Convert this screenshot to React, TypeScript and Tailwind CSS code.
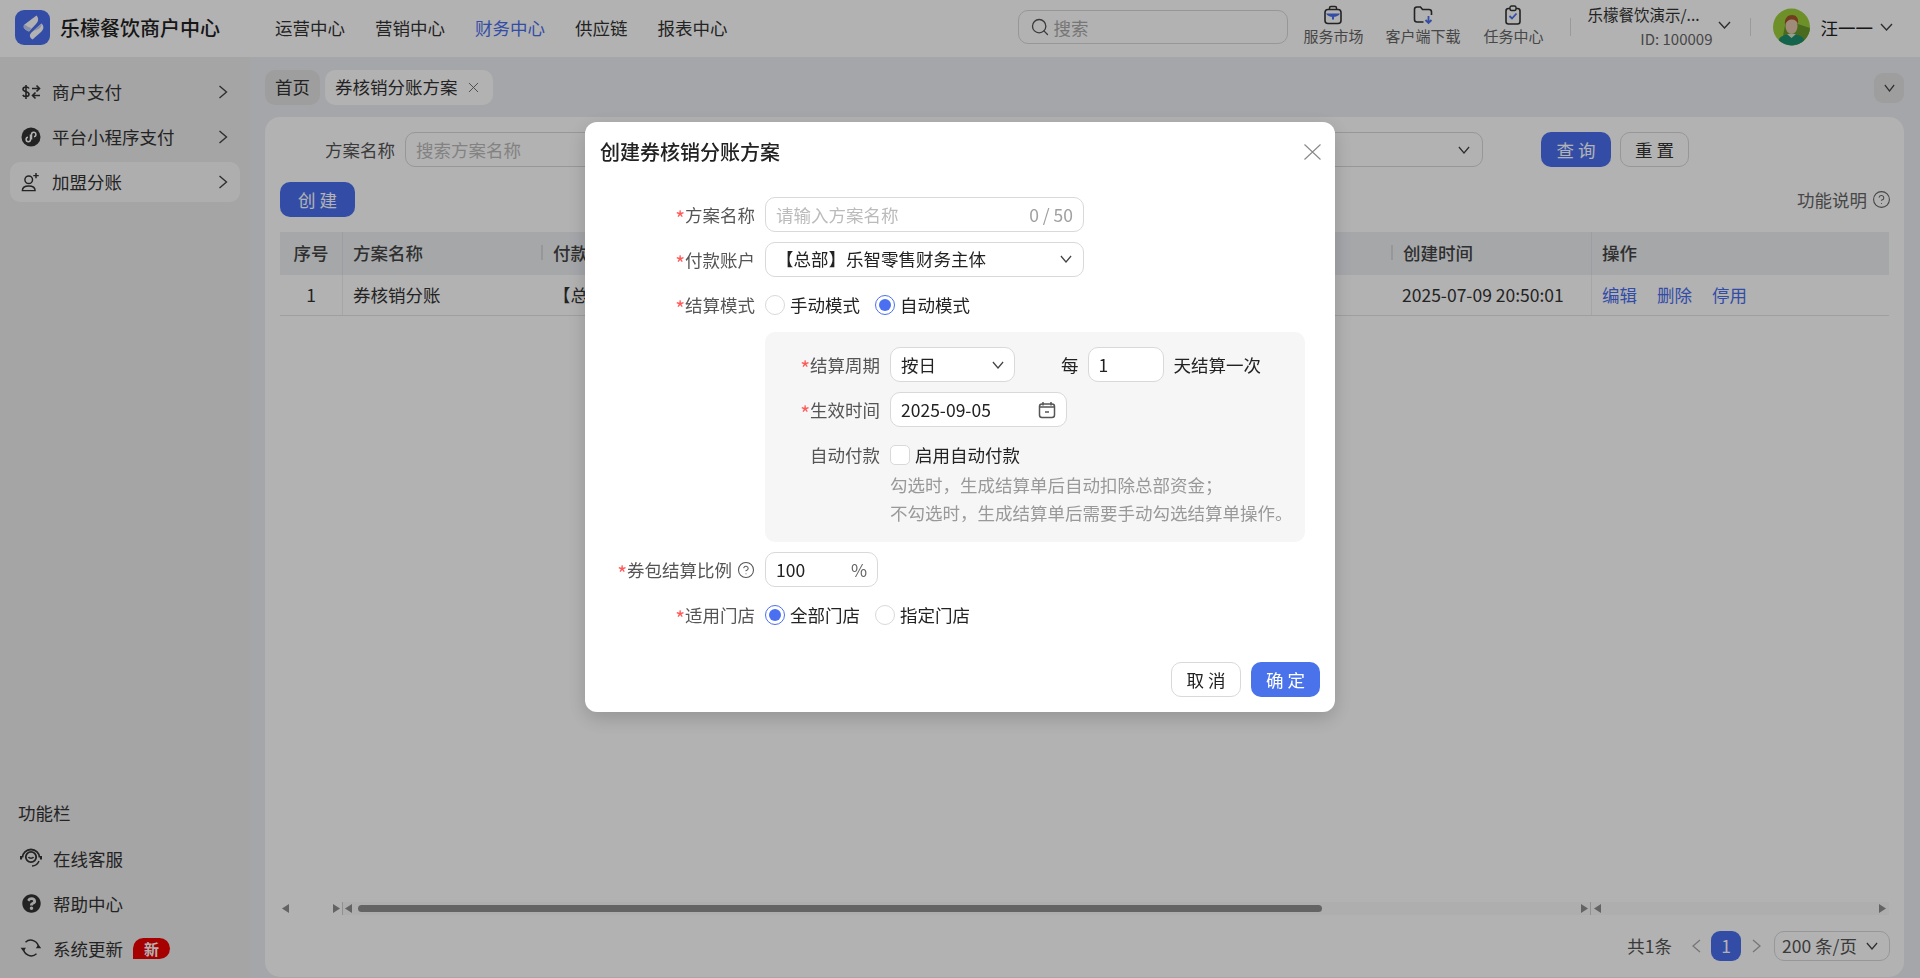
import { CircleHelp, Search, X } from "lucide-react";
import { FaQuestionCircle } from "react-icons/fa";

// ── Small icons ────────────────────────────────────────────────────────────────

function ChevRight() {
  return (
    <svg width="10" height="14" viewBox="0 0 10 14" fill="none" stroke="#444" strokeWidth="1.4">
      <path d="M1.5 1l7 6-7 6" />
    </svg>
  );
}

function ChevDown({ color = "#444", w = 13 }: { color?: string; w?: number }) {
  return (
    <svg width={w} height="8" viewBox="0 0 13 8" fill="none" stroke={color} strokeWidth="1.4" preserveAspectRatio="none">
      <path d="M1 1l5.5 6L12 1" />
    </svg>
  );
}

function Logo() {
  return (
    <div className="size-[35px] shrink-0 rounded-[9px] bg-[#4a6ff0]">
      <svg width="35" height="35" viewBox="0 0 35 35">
        <path d="M21.500 5.500C24 8.500 23.500 11.500 21 14L14 21.500C10.500 20 7 17.500 9.500 14.500Z" fill="#fff" />
        <path d="M9.500 14.500C7 17.500 10.500 20 14 21.500L17 18.300C14 17.500 11.500 16 9.500 14.500Z" fill="#c3cdf3" />
        <path d="M26.500 13.500C29.500 16.500 28.500 19.500 26 22L17.500 29.500C14.500 27.500 14 25 16.500 22.500Z" fill="#fff" />
        <path d="M26.500 13.500C27 16 25 18.500 22.500 19.500L18 21C17.500 21.300 17 22 16.500 22.500Z" fill="#c3cdf3" />
      </svg>
    </div>
  );
}

function BagIcon() {
  return (
    <svg width="20" height="20" viewBox="0 0 20 20" fill="none">
      <path d="M6.500 4.500V3a1.500 1.500 0 011.500-1.500h4A1.500 1.500 0 0113.500 3v1.500" stroke="#333" strokeWidth="1.500" />
      <rect x="2" y="4.500" width="16" height="14" rx="3" stroke="#333" strokeWidth="1.600" />
      <path d="M3 8.500h14c-1 2-4 3.500-7 3.500s-6-1.500-7-3.500z" fill="#4a6ff0" />
      <path d="M9 11.500h2v3H9z" fill="#4a6ff0" />
    </svg>
  );
}

function FolderIcon() {
  return (
    <svg width="20" height="20" viewBox="0 0 20 20" fill="none">
      <path
        d="M10.500 17H4a2.500 2.500 0 01-2.500-2.500v-10A2.500 2.500 0 014 2h3.500l2 2.500H16a2.500 2.500 0 012.500 2.500v3"
        stroke="#333"
        strokeWidth="1.600"
      />
      <path d="M15.500 11v6.500M12.500 15l3 3 3-3" stroke="#4a6ff0" strokeWidth="1.800" />
    </svg>
  );
}

function ClipIcon() {
  return (
    <svg width="20" height="20" viewBox="0 0 20 20" fill="none">
      <rect x="3" y="3.500" width="14" height="15.500" rx="2.500" stroke="#333" strokeWidth="1.600" />
      <rect x="7" y="1" width="6" height="4.500" rx="1.500" fill="#fff" stroke="#333" strokeWidth="1.400" />
      <path d="M6.500 11l2.500 2.500 4.500-5" stroke="#4a6ff0" strokeWidth="1.800" />
    </svg>
  );
}

function DollarSwapIcon() {
  return (
    <svg width="20" height="16" viewBox="0 0 20 16" fill="none" stroke="#333" strokeWidth="1.600">
      <path d="M8 4.500C7.500 3.500 6.500 3 5 3c-1.700 0-3 .8-3 2.300 0 3 6 1.700 6 4.700C8 11.500 6.800 12.500 5 12.500c-1.500 0-2.700-.6-3.200-1.700M5 1v14" />
      <path d="M11 4.500h7.500M15.500 1.500l3 3-3 3M19 11.500h-7.500M14.500 8.500l-3 3 3 3" />
    </svg>
  );
}

function MiniProgramIcon() {
  return (
    <svg width="20" height="20" viewBox="0 0 20 20" fill="none">
      <circle cx="10" cy="10" r="9.500" fill="#333" />
      <path
        d="M9.500 7.500v5a2.200 2.200 0 11-2.500-2.200M10.500 12.500v-5A2.200 2.200 0 1113 9.700"
        stroke="#fff"
        strokeWidth="1.500"
      />
    </svg>
  );
}

function UserPlusIcon() {
  return (
    <svg width="22" height="22" viewBox="0 0 22 22" fill="none" stroke="#333" strokeWidth="1.600">
      <circle cx="8.500" cy="8.500" r="4.200" />
      <path d="M1.500 20.500c0-3.500 3-5 7-5s7 1.500 7 5z" />
      <path d="M16.500 1v6M13.500 4h6" />
    </svg>
  );
}

function HeadsetIcon() {
  return (
    <svg width="22" height="20" viewBox="0 0 22 20" fill="none" stroke="#333">
      <path d="M2.500 9.500a8.500 8 0 0117 0" strokeWidth="1.800" />
      <circle cx="11" cy="9" r="5.200" strokeWidth="1.800" />
      <path d="M8.500 9c.8 1.600 4.200 1.600 5 0" strokeWidth="1.600" />
      <path d="M1 8v3.500M21 8v3.500" strokeWidth="2.200" />
      <path d="M19 13c-1.500 3.500-4 5-7 5" strokeWidth="1.500" />
    </svg>
  );
}

function SyncIcon() {
  return (
    <svg width="22" height="20" viewBox="0 0 22 20" fill="none" stroke="#333" strokeWidth="1.500">
      <path d="M18.500 10A7.800 7.800 0 005.500 4.200" />
      <path d="M3.500 10A7.800 7.800 0 0016.500 15.800" />
      <path d="M0.800 9.800h5.400L3.500 13.500zM16 10.200h5.400L18.700 6.500z" fill="#333" stroke="none" transform="rotate(180 11 10)" />
    </svg>
  );
}

function CalendarIcon() {
  return (
    <svg width="18" height="18" viewBox="0 0 18 18" fill="none" stroke="#555" strokeWidth="1.500">
      <rect x="1.500" y="3" width="15" height="13.500" rx="2.500" />
      <path d="M5 1v3.500M13 1v3.500M1.500 6h15M7 11h4" />
    </svg>
  );
}

function CloseIcon() {
  return (
    <svg width="17" height="16" viewBox="0 0 17 16" fill="none" stroke="#888" strokeWidth="1.100">
      <path d="M.5.5l16 15M16.500.5l-16 15" />
    </svg>
  );
}

function Avatar() {
  return (
    <svg width="37" height="38" viewBox="0 0 37 38" className="shrink-0">
      <defs>
        <clipPath id="avatarClip">
          <circle cx="18.500" cy="19" r="18.500" />
        </clipPath>
      </defs>
      <g clipPath="url(#avatarClip)">
        <rect width="37" height="38" fill="#9ccf3c" />
        <path d="M13 12 L37 20 V38 H20 L10 28z" fill="#6b9a2a" />
        <path d="M6 38v-6c0-3 4-4.500 8-5.500h9c4 1 8 2.500 8 5.500v6z" fill="#1e8f6f" />
        <path d="M14 26l4.500 4 4.500-4z" fill="#d9e4c9" />
        <ellipse cx="18.500" cy="18" rx="6" ry="8" fill="#e5c6ae" />
        <path d="M12 17c-1-7 3-10 7-10s7 3 6 9c-1-3-3-4.500-6-4.500-3 0-6 2-7 5.500z" fill="#a4572a" />
      </g>
    </svg>
  );
}

function Arrow({ dir }: { dir: "left" | "right" }) {
  return (
    <svg width="7" height="9" viewBox="0 0 7 9" fill="#8f8f8f" className="shrink-0">
      {dir === "left" ? <path d="M7 0v9L0 4.500z" /> : <path d="M0 0v9l7-4.500z" />}
    </svg>
  );
}

// ── Sidebar ────────────────────────────────────────────────────────────────────

const payItems = [
  { title: "商户支付", icon: <DollarSwapIcon /> },
  { title: "平台小程序支付", icon: <MiniProgramIcon /> },
  { title: "加盟分账", icon: <UserPlusIcon />, active: true },
];

const toolItems = [
  { title: "在线客服", icon: <HeadsetIcon /> },
  { title: "帮助中心", icon: <FaQuestionCircle size={19} color="#333" /> },
  { title: "系统更新", icon: <SyncIcon />, badge: true },
];

function Sidebar() {
  return (
    <aside className="flex w-[250px] shrink-0 flex-col justify-between bg-[#ececec] pb-[10px] pt-[15px]">
      <div className="flex flex-col gap-[5px] px-[10px]">
        {payItems.map((item) => (
          <div
            key={item.title}
            className={
              "flex h-[40px] items-center rounded-[10px] pl-[11px] pr-[12px] text-[#333] " +
              (item.active ? "bg-[#fafafa]" : "")
            }
          >
            <span className="flex w-[20px] shrink-0 items-center justify-center">{item.icon}</span>
            <span className="ml-[11px] -mt-[2px] flex-1">{item.title}</span>
            <ChevRight />
          </div>
        ))}
      </div>
      <div className="flex flex-col">
        <div className="mb-[13px] pl-[18px] leading-[25px] text-[#333]">功能栏</div>
        <div className="flex flex-col gap-[5px]">
          {toolItems.map((item) => (
            <div key={item.title} className="flex h-[40px] items-center pl-[20px] text-[#333]">
              <span className="flex w-[22px] shrink-0 items-center justify-center">{item.icon}</span>
              <span className="ml-[11px]">{item.title}</span>
              {item.badge && (
                <span className="ml-[10px] flex h-[21px] w-[37px] items-center justify-center rounded-full rounded-bl-none bg-[#f00000] text-[15px] font-bold leading-none text-white">
                  新
                </span>
              )}
            </div>
          ))}
        </div>
      </div>
    </aside>
  );
}

// ── Header ─────────────────────────────────────────────────────────────────────

const navItems = ["运营中心", "营销中心", "财务中心", "供应链", "报表中心"];

function HeaderTool({ label, icon }: { label: string; icon: React.ReactNode }) {
  return (
    <div className="-mt-[5px] flex flex-col items-center">
      <div className="flex h-[24px] items-center">{icon}</div>
      <span className="-mt-[2px] text-[15px] leading-[22px] text-[#666]">{label}</span>
    </div>
  );
}

function Header() {
  return (
    <header className="flex h-[57px] shrink-0 items-center bg-white pb-[3px] pl-[15px] pr-[27px]">
      <Logo />
      <span className="ml-[10px] text-[20px] font-medium text-[#222]">乐檬餐饮商户中心</span>
      <nav className="ml-[55px] flex gap-[30px]">
        {navItems.map((item) => (
          <span key={item} className={item === "财务中心" ? "text-[#4a6ff0]" : "text-[#333]"}>
            {item}
          </span>
        ))}
      </nav>
      <div className="ml-auto flex items-center">
        <div className="flex h-[34px] w-[270px] items-center rounded-[10px] border border-[#d9d9d9] pl-[11px]">
          <Search size={20} color="#555" strokeWidth={1.6} />
          <span className="ml-[3px] text-[#aaa]">搜索</span>
        </div>
        <div className="ml-[15px]">
          <HeaderTool label="服务市场" icon={<BagIcon />} />
        </div>
        <div className="ml-[22px]">
          <HeaderTool label="客户端下载" icon={<FolderIcon />} />
        </div>
        <div className="ml-[23px]">
          <HeaderTool label="任务中心" icon={<ClipIcon />} />
        </div>
        <div className="ml-[26px] h-[18px] w-px bg-[#ddd]" />
        <div className="-mt-[2px] ml-[17px] flex w-[125px] flex-col">
          <span className="text-[15.500px] leading-[24px] text-[#333]">乐檬餐饮演示/...</span>
          <span className="mt-[1px] text-right text-[15px] leading-[24px] text-[#666]">ID: 100009</span>
        </div>
        <div className="ml-[5px] -mt-[5px]">
          <ChevDown />
        </div>
        <div className="ml-[19px] h-[18px] w-px bg-[#ddd]" />
        <div className="ml-[22px]">
          <Avatar />
        </div>
        <span className="ml-[11px] text-[#222]">汪一一</span>
        <div className="ml-[7px]">
          <ChevDown />
        </div>
      </div>
    </header>
  );
}

// ── Page behind the dialog ─────────────────────────────────────────────────────

function ColSep() {
  return <span className="mr-[10px] h-[15px] w-[2px] shrink-0 bg-[#d6d8dd]" />;
}

function Scrollbars() {
  return (
    <div className="flex h-[13px] items-center">
      <div className="flex h-full w-[62px] items-center justify-between px-[2px]">
        <Arrow dir="left" />
        <Arrow dir="right" />
      </div>
      <div className="h-full w-px bg-[#d0d0d0]" />
      <div className="flex h-full w-[1247px] items-center bg-[#fafafa] px-[2px]">
        <Arrow dir="left" />
        <div className="ml-[6px] h-[7px] w-[964px] rounded-full bg-[#909090]" />
        <div className="flex-1" />
        <Arrow dir="right" />
      </div>
      <div className="h-full w-px bg-[#d0d0d0]" />
      <div className="flex h-full flex-1 items-center justify-between bg-[#fafafa] px-[3px]">
        <Arrow dir="left" />
        <Arrow dir="right" />
      </div>
    </div>
  );
}

function PageCard() {
  return (
    <section className="flex flex-1 flex-col rounded-[15px] bg-white pb-[16px] pt-[15px]">
      {/* Filter */}
      <div className="flex h-[35px] items-center">
        <span className="ml-[60px] mr-[10px] text-[#555]">方案名称</span>
        <div className="flex h-full w-[300px] items-center rounded-[10px] border border-[#d9d9d9] pl-[10px] text-[#bbb]">
          搜索方案名称
        </div>
        <div className="ml-[195px] flex h-full w-[583px] items-center justify-end rounded-[10px] border border-[#d9d9d9] pr-[12px]">
          <ChevDown w={12} />
        </div>
        <button className="ml-[58px] h-full w-[70px] rounded-[10px] bg-[#4a6ff0] text-white">查 询</button>
        <button className="ml-[9px] h-full w-[69px] rounded-[10px] border border-[#d9d9d9] text-[#333]">重 置</button>
      </div>

      <div className="mt-[15px] flex h-[35px] items-center justify-between pl-[15px] pr-[13px]">
        <button className="h-full w-[75px] rounded-[10px] bg-[#4a6ff0] text-white">创 建</button>
        <span className="flex items-center text-[#666]">
          功能说明
          <CircleHelp size={19} strokeWidth={1.4} className="ml-[5px]" />
        </span>
      </div>

      {/* Table */}
      <div className="mt-[15px] px-[15px]">
        <div className="flex h-[43px] items-center bg-[#edeff3] font-medium text-[#444]">
          <div className="flex h-full w-[63px] items-center justify-center border-r border-[#e0e2e7] pb-[2px]">序号</div>
          <div className="w-[198px] pb-[2px] pl-[10px]">方案名称</div>
          <div className="flex w-[850px] items-center pb-[2px]">
            <ColSep />
            付款账户
          </div>
          <div className="flex w-[200px] items-center pb-[2px]">
            <ColSep />
            创建时间
          </div>
          <div className="flex h-full flex-1 items-center border-l border-[#e0e2e7] pb-[2px] pl-[10px]">操作</div>
        </div>
        <div className="flex h-[41px] items-center border-b border-[#e4e4e4] text-[#333]">
          <div className="flex h-full w-[63px] items-center justify-center border-r border-[#eee] pb-[2px]">1</div>
          <div className="w-[198px] pb-[2px] pl-[10px]">券核销分账</div>
          <div className="w-[850px] pb-[2px] pl-[12px]">【总部】乐智零售财务主体</div>
          <div className="w-[200px] pb-[2px] pl-[11px]">2025-07-09 20:50:01</div>
          <div className="flex h-full flex-1 items-center gap-[20px] border-l border-[#eee] pb-[2px] pl-[10px] text-[#4a6ff0]">
            <span>编辑</span>
            <span>删除</span>
            <span>停用</span>
          </div>
        </div>
      </div>

      <div className="flex-1" />

      <div className="px-[15px]">
        <Scrollbars />
      </div>

      {/* Pagination */}
      <div className="mt-[16px] flex h-[30px] items-center justify-end px-[14px] text-[#555]">
        <span className="pb-[2px]">共1条</span>
        <span className="ml-[20px] text-[#aaa]">
          <svg width="9" height="14" viewBox="0 0 9 14" fill="none" stroke="#aaa" strokeWidth="1.300">
            <path d="M8 1L1 7l7 6" />
          </svg>
        </span>
        <span className="ml-[10px] flex size-[30px] items-center justify-center rounded-[9px] bg-[#4a6ff0] pb-[2px] text-white">1</span>
        <span className="ml-[11px]">
          <svg width="9" height="14" viewBox="0 0 9 14" fill="none" stroke="#aaa" strokeWidth="1.300">
            <path d="M1 1l7 6-7 6" />
          </svg>
        </span>
        <div className="ml-[13px] flex h-full w-[116px] items-center justify-between rounded-[10px] border border-[#d9d9d9] pb-[1px] pl-[7px] pr-[11px]">
          <span>200 条/页</span>
          <ChevDown w={12} />
        </div>
      </div>
    </section>
  );
}

// ── Dialog ─────────────────────────────────────────────────────────────────────

function Label({ children, width, star = true }: { children: React.ReactNode; width: string; star?: boolean }) {
  return (
    <div className={"flex shrink-0 items-center justify-end whitespace-nowrap text-[#555] " + width}>
      {star && <span className="mt-[7px] text-[21px] leading-none text-[#ff5a5a]">*</span>}
      {children}
    </div>
  );
}

function Radio({ label, checked }: { label: string; checked?: boolean }) {
  return (
    <div className="flex items-center">
      <span
        className={
          "flex size-[20px] items-center justify-center rounded-full border bg-white " +
          (checked ? "border-[#4a6ff0]" : "border-[#d9d9d9]")
        }
      >
        {checked && <span className="size-[12px] rounded-full bg-[#4a6ff0]" />}
      </span>
      <span className="ml-[5px] text-[#222]">{label}</span>
    </div>
  );
}

function Dialog() {
  return (
    <div className="fixed inset-0 flex items-start justify-center bg-black/30 pt-[122px]">
      <div className="w-[750px] rounded-[12px] bg-white pb-[15px] shadow-[0_6px_20px_rgba(0,0,0,0.18)]">
        <div className="flex h-[60px] items-center justify-between pl-[15px] pr-[14px]">
          <span className="pb-[2px] text-[20px] font-medium text-[#222]">创建券核销分账方案</span>
          <CloseIcon />
        </div>

        <div className="mt-[15px] flex flex-col gap-[10px]">
          <div className="flex h-[35px] items-center">
            <Label width="w-[170px]">方案名称</Label>
            <div className="ml-[10px] flex h-full w-[319px] items-center justify-between rounded-[10px] border border-[#d9d9d9] px-[10px]">
              <span className="text-[#bbb]">请输入方案名称</span>
              <span className="text-[#a0a0a0]">0 / 50</span>
            </div>
          </div>

          <div className="flex h-[35px] items-center">
            <Label width="w-[170px]">付款账户</Label>
            <div className="ml-[10px] flex h-full w-[319px] items-center justify-between rounded-[10px] border border-[#d9d9d9] pb-[2px] pl-[10px] pr-[11px] text-[#222]">
              <span>【总部】乐智零售财务主体</span>
              <ChevDown w={12} />
            </div>
          </div>

          <div className="flex h-[35px] items-center">
            <Label width="w-[170px]">结算模式</Label>
            <div className="ml-[10px] flex gap-[15px]">
              <Radio label="手动模式" />
              <Radio label="自动模式" checked />
            </div>
          </div>

          <div className="ml-[180px] mr-[30px] rounded-[10px] bg-[#f6f6f6] pb-[15px] pt-[15px]">
            <div className="flex h-[35px] items-center">
              <Label width="w-[115px]">结算周期</Label>
              <div className="ml-[10px] flex h-full w-[125px] items-center justify-between rounded-[10px] border border-[#d9d9d9] bg-white pl-[10px] pr-[10px] text-[#222]">
                <span>按日</span>
                <ChevDown w={12} />
              </div>
              <span className="ml-[46px] text-[#222]">每</span>
              <div className="ml-[9px] flex h-full w-[76px] items-center rounded-[10px] border border-[#d9d9d9] bg-white pl-[10px] text-[#222]">
                1
              </div>
              <span className="ml-[10px] text-[#222]">天结算一次</span>
            </div>

            <div className="mt-[10px] flex h-[35px] items-center">
              <Label width="w-[115px]">生效时间</Label>
              <div className="ml-[10px] flex h-full w-[177px] items-center justify-between rounded-[10px] border border-[#d9d9d9] bg-white pl-[10px] pr-[10px] text-[#222]">
                <span>2025-09-05</span>
                <CalendarIcon />
              </div>
            </div>

            <div className="mt-[10px] flex h-[35px] items-center">
              <Label width="w-[115px]" star={false}>
                自动付款
              </Label>
              <span className="ml-[10px] size-[20px] rounded-[5px] border border-[#d9d9d9] bg-white" />
              <span className="ml-[5px] text-[#222]">启用自动付款</span>
            </div>

            <div className="-mt-[1px] ml-[125px] leading-[28px] text-[#999]">
              <p>勾选时，生成结算单后自动扣除总部资金；</p>
              <p>不勾选时，生成结算单后需要手动勾选结算单操作。</p>
            </div>
          </div>

          <div className="flex h-[35px] items-center">
            <Label width="w-[170px]">
              券包结算比例
              <CircleHelp size={18} strokeWidth={1.400} color="#555" className="ml-[5px]" />
            </Label>
            <div className="ml-[10px] flex h-full w-[113px] items-center justify-between rounded-[10px] border border-[#d9d9d9] pl-[10px] pr-[10px] text-[#222]">
              <span>100</span>
              <span className="text-[#666]">%</span>
            </div>
          </div>

          <div className="flex h-[35px] items-center">
            <Label width="w-[170px]">适用门店</Label>
            <div className="ml-[10px] flex gap-[15px]">
              <Radio label="全部门店" checked />
              <Radio label="指定门店" />
            </div>
          </div>
        </div>

        <div className="mt-[30px] flex justify-end gap-[10px] pr-[15px]">
          <button className="h-[35px] w-[70px] rounded-[10px] border border-[#d9d9d9] text-[#222]">取 消</button>
          <button className="h-[35px] w-[69px] rounded-[10px] bg-[#4a73eb] text-white">确 定</button>
        </div>
      </div>
    </div>
  );
}

export default function App() {
  return (
    <div className="flex h-screen w-full flex-col overflow-hidden bg-[#edeef2] font-['Noto_Sans_CJK_SC',sans-serif] text-[17.5px] leading-[25px]">
      <Header />
      <div className="flex min-h-0 flex-1">
        <Sidebar />
        <main className="flex min-w-0 flex-1 flex-col pb-px pl-[15px] pr-[16px]">
          <div className="mt-[13px] flex h-[35px] shrink-0 items-center gap-[5px]">
            <span className="flex h-full w-[55px] items-center justify-center rounded-[10px] bg-[#e2e2e2] pb-[2px] text-[#333]">首页</span>
            <span className="flex h-full w-[168px] items-center gap-[7px] rounded-[10px] bg-white pb-[2px] pl-[10px] text-[#333]">
              券核销分账方案
              <X size={17} strokeWidth={1.300} color="#666" className="mt-[2px]" />
            </span>
            <span className="ml-auto flex size-[30px] items-center justify-center rounded-[9px] bg-[#e2e2e2]">
              <ChevDown w={11} />
            </span>
          </div>
          <div className="mt-[12px] flex min-h-0 flex-1">
            <PageCard />
          </div>
        </main>
      </div>
      <Dialog />
    </div>
  );
}
